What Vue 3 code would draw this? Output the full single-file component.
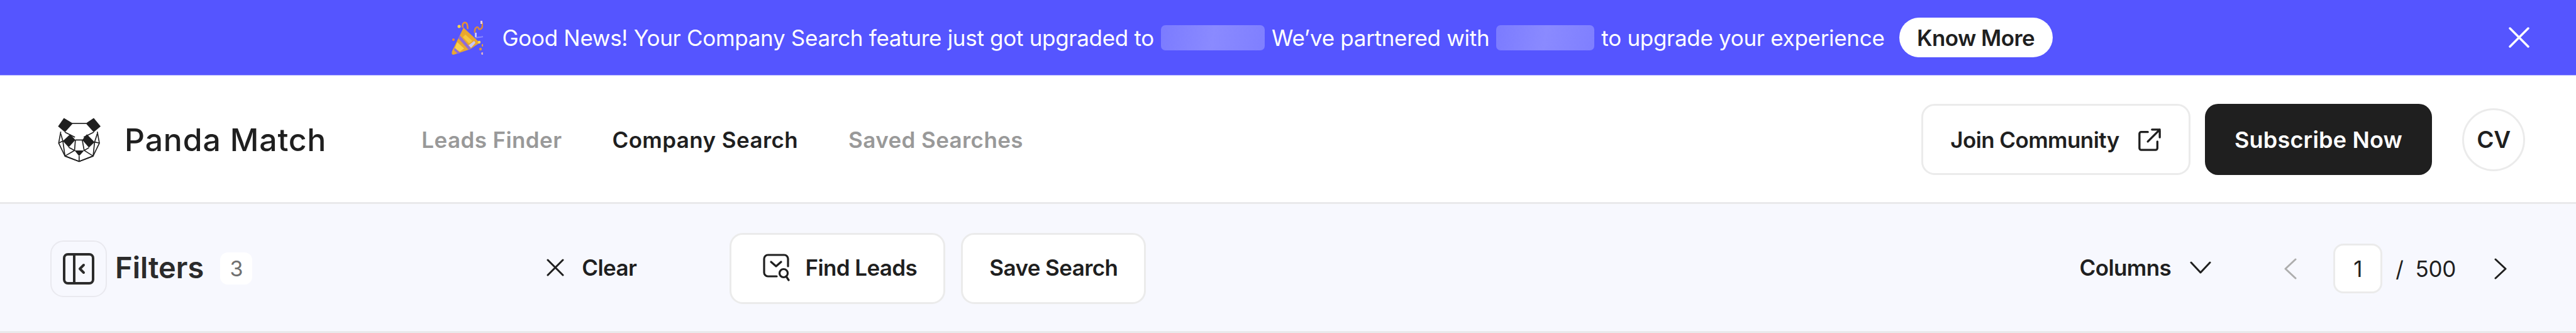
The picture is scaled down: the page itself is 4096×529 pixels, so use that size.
<script setup>
const links = [
  { label: 'Leads Finder', active: false },
  { label: 'Company Search', active: true },
  { label: 'Saved Searches', active: false },
]
</script>

<template>
  <div class="page">
    <div class="banner">
      <div class="banner-content">
        <svg class="party" viewBox="0 0 50 58" width="50" height="58">
          <path d="M19 13 L45 37 L37 42 L30 47 L3 56 C0 56 0 53 1 50 Z" fill="#e9a72e" />
          <path d="M9 36 L20 46 L13 51 L5 46 Z" fill="#fad24a" />
          <path d="M22 24 L33 34 L28 38 L18 28 Z" fill="#f6c93d" />
          <path d="M13 25 L31 46 L27 48 L11 30 Z" fill="#8f6bd8" />
          <path d="M5 45 L14 53 L10 54.500 L4 49 Z" fill="#8f6bd8" />
          <path d="M27 41 L36 34 L38 37 L31 45 Z" fill="#c9c6f4" />
          <path d="M18 13 C16 6 21 3 24 6 C26 9 25 12 26 15" fill="none" stroke="#e8922e" stroke-width="2.500" />
          <path d="M37 21 C36 12 42 10 43 14 C44 18 50 14 49 8 C49 5 47 4 47 3" fill="none" stroke="#d8893c" stroke-width="2.500" />
          <rect x="37" y="21" width="3" height="7" fill="#c9c6f4" />
          <rect x="46" y="2" width="3" height="5" fill="#e6d0e0" />
          <path d="M38 29 L52 27" stroke="#8a87ff" stroke-width="2" />
          <circle cx="12" cy="11" r="2.500" fill="#ffd94a" />
          <circle cx="44" cy="36" r="2.200" fill="#ffd94a" />
          <circle cx="3" cy="32" r="2" fill="#e8883c" />
          <circle cx="50" cy="41" r="2.200" fill="#e8a13c" />
          <circle cx="46" cy="47" r="2.200" fill="#d8933c" />
          <circle cx="49" cy="54" r="2" fill="#d8b0c8" />
        </svg>
        <span class="banner-text">Good News! Your Company Search feature just got upgraded to</span>
        <span class="blur wide"></span>
        <span class="banner-text">We’ve partnered with</span>
        <span class="blur"></span>
        <span class="banner-text">to upgrade your experience</span>
        <button class="know-more">Know More</button>
      </div>
      <svg class="banner-close" viewBox="0 0 33 33" width="33" height="33">
        <path d="M2 2 L31 31 M31 2 L2 31" stroke="#fff" stroke-width="3.500" stroke-linecap="round" />
      </svg>
    </div>

    <header class="topnav">
      <div class="brand">
        <svg class="panda" viewBox="90 80 220 225" width="73" height="75">
          <g fill="#1f1f1f">
            <path d="M125 90 L168 116 L130 158 L97 130 Z" />
            <path d="M268 90 L301 130 L268 158 L230 116 Z" />
            <path d="M155 168 L180 195 L148 230 L120 200 Z" />
            <path d="M235 168 L272 205 L245 232 L213 195 Z" />
            <path d="M176 245 L222 245 L198 272 Z" />
          </g>
          <g fill="none" stroke="#1f1f1f" stroke-width="5" stroke-linejoin="round">
            <path d="M165 116 H232" />
            <path d="M110 155 L100 210 L130 272 L198 298 L265 272 L295 210 L285 155" />
            <path d="M130 158 L178 182 M268 158 L220 182" />
            <path d="M110 165 L120 200 L100 210 M285 165 L272 205 L295 210" />
            <path d="M120 200 L130 272 L176 245 L148 230 M272 205 L265 272 L222 245 L245 232" />
            <path d="M180 195 H213 L222 245 M180 195 L176 245 M198 272 V298 M130 272 L198 298 L265 272" />
          </g>
        </svg>
        <span class="brand-name">Panda Match</span>
      </div>
      <nav class="links">
        <a v-for="l in links" :key="l.label" class="link" :class="{ active: l.active }">{{ l.label }}</a>
      </nav>
      <div class="actions">
        <button class="btn-outline join">
          Join Community
          <svg viewBox="0 0 40 40" width="38" height="38" fill="none" stroke="#1f1f1f" stroke-width="3.500" stroke-linecap="round" stroke-linejoin="round">
            <path d="M17 7 H6 A3 3 0 0 0 3 10 V34 A3 3 0 0 0 6 37 H30 A3 3 0 0 0 33 34 V23" />
            <path d="M17 23 L37 3 M24 3 H37 V16" />
          </svg>
        </button>
        <button class="subscribe">Subscribe Now</button>
        <div class="avatar">CV</div>
      </div>
    </header>

    <div class="filterbar">
      <div class="toggle">
        <svg viewBox="0 0 50 50" width="50" height="50" fill="none" stroke="#2b2b2b" stroke-width="4" stroke-linecap="round" stroke-linejoin="round">
          <rect x="2" y="2" width="46" height="46" rx="6" />
          <path d="M18 2 V48" />
          <path d="M33 19 L27 25 L33 31" />
        </svg>
      </div>
      <span class="filters-title">Filters</span>
      <span class="badge">3</span>
      <button class="clear">
        <svg viewBox="0 0 28 28" width="28" height="28">
          <path d="M2 2 L26 26 M26 2 L2 26" stroke="#1f1f1f" stroke-width="3" stroke-linecap="round" />
        </svg>
        Clear
      </button>
      <button class="btn-outline small find">
        <svg viewBox="0 0 44 44" width="44" height="44" fill="none" stroke="#1f1f1f" stroke-width="3.200" stroke-linecap="round" stroke-linejoin="round">
          <path d="M22 36 H8 A6 6 0 0 1 2 30 V8 A6 6 0 0 1 8 2 H34 A6 6 0 0 1 40 8 V20" />
          <path d="M13 13 L21 20 L29 13" />
          <circle cx="33" cy="31" r="6.500" />
          <path d="M37 36 L41 42" />
        </svg>
        Find Leads
      </button>
      <button class="btn-outline small save">Save Search</button>

      <div class="right-tools">
        <button class="columns">
          Columns
          <svg viewBox="0 0 34 20" width="34" height="20" fill="none" stroke="#1f1f1f" stroke-width="3" stroke-linecap="round" stroke-linejoin="round">
            <path d="M2 2 L17 18 L32 2" />
          </svg>
        </button>
        <svg class="prev" viewBox="0 0 20 34" width="20" height="34" fill="none" stroke="#aeaeae" stroke-width="3" stroke-linecap="round" stroke-linejoin="round">
          <path d="M18 2 L2 17 L18 32" />
        </svg>
        <div class="page-input">1</div>
        <span class="slash">/</span>
        <span class="total">500</span>
        <svg class="next" viewBox="0 0 20 34" width="20" height="34" fill="none" stroke="#1f1f1f" stroke-width="3" stroke-linecap="round" stroke-linejoin="round">
          <path d="M2 2 L18 17 L2 32" />
        </svg>
      </div>
    </div>
  </div>
</template>

<style>
html, body {
  margin: 0;
  background: #fff;
}
</style>

<style scoped>
.page {
  width: 4096px;
  height: 529px;
  overflow: hidden;
  display: flex;
  flex-direction: column;
  font-family: "Inter", "Liberation Sans", sans-serif;
  font-size: 35px;
  letter-spacing: -0.3px;
  color: #1f1f1f;
}
button {
  font-family: inherit;
  font-size: inherit;
  letter-spacing: inherit;
  color: inherit;
  background: none;
  border: none;
  padding: 0;
}
.banner {
  height: 119px;
  flex: none;
  background: #5555ff;
  border-bottom: 1px solid #a8a8ff;
  display: flex;
  align-items: center;
}
.banner-content {
  flex: 1;
  display: flex;
  align-items: center;
  justify-content: center;
}
.party {
  margin-right: 30px;
}
.banner-text {
  color: #fff;
  white-space: nowrap;
}
.blur {
  width: 156px;
  height: 40px;
  margin: 0 11px;
  border-radius: 7px;
  background: linear-gradient(100deg, #7b7bff, #8a8aff 50%, #7f7fff);
}
.blur.wide {
  width: 165px;
}
.know-more {
  margin-left: 23px;
  width: 244px;
  height: 63px;
  border-radius: 32px;
  background: #fff;
  font-weight: 600;
  letter-spacing: -0.6px;
}
.banner-close {
  margin: 0 74px 0 7px;
}
.topnav {
  height: 204px;
  flex: none;
  box-sizing: border-box;
  padding: 2px 81px 0 90px;
  background: #fff;
  border-bottom: 3px solid #e9e9eb;
  display: flex;
  align-items: center;
}
.brand {
  display: flex;
  align-items: center;
  gap: 35px;
}
.brand-name {
  font-size: 50px;
  font-weight: 500;
  letter-spacing: 0.8px;
  white-space: nowrap;
}
.links {
  margin-left: 151px;
  display: flex;
  gap: 80px;
}
.link {
  font-size: 35px;
  letter-spacing: 0.4px;
  font-weight: 600;
  color: #999;
  white-space: nowrap;
}
.link.active {
  color: #1f1f1f;
}
.actions {
  margin-left: auto;
  display: flex;
  align-items: center;
}
.btn-outline {
  box-sizing: border-box;
  display: flex;
  align-items: center;
  background: #fff;
  border: 3px solid #ebebeb;
  border-radius: 21px;
  font-weight: 600;
  letter-spacing: -0.6px;
  white-space: nowrap;
}
.join {
  width: 428px;
  height: 113px;
  justify-content: center;
  gap: 29px;
}
.subscribe {
  margin-left: 23px;
  width: 361px;
  height: 113px;
  border-radius: 21px;
  background: #1f1f1f;
  color: #fff;
  font-size: 36px;
  letter-spacing: 0.2px;
  font-weight: 600;
  white-space: nowrap;
}
.avatar {
  margin-left: 48px;
  box-sizing: border-box;
  width: 100px;
  height: 100px;
  border-radius: 50%;
  border: 3px solid #ebebeb;
  display: flex;
  align-items: center;
  justify-content: center;
  font-size: 37px;
  font-weight: 600;
}
.filterbar {
  flex: 1;
  box-sizing: border-box;
  padding: 3px 110px 0 80px;
  background: #f7f8fe;
  border-bottom: 3px solid #e9e9eb;
  display: flex;
  align-items: center;
}
.toggle {
  box-sizing: border-box;
  width: 90px;
  height: 90px;
  border: 2px solid #e9e9ef;
  border-radius: 21px;
  display: flex;
  align-items: center;
  justify-content: center;
}
.filters-title {
  margin: 0 0 5px 13px;
  font-size: 47px;
  letter-spacing: 0;
  font-weight: 600;
  color: #2b2b2b;
}
.badge {
  margin-left: 26px;
  width: 51px;
  height: 51px;
  border-radius: 12px;
  background: #fff;
  color: #707070;
  font-size: 34px;
  display: flex;
  align-items: center;
  justify-content: center;
}
.clear {
  margin-left: 468px;
  padding-bottom: 3px;
  display: flex;
  align-items: center;
  gap: 28px;
  font-weight: 600;
  letter-spacing: -0.6px;
}
.small {
  height: 113px;
  padding-bottom: 3px;
  justify-content: center;
}
.find {
  margin-left: 148px;
  width: 343px;
  padding-left: 8px;
  gap: 23px;
}
.save {
  margin-left: 25px;
  width: 294px;
}
.right-tools {
  margin-left: auto;
  display: flex;
  align-items: center;
}
.columns {
  display: flex;
  align-items: center;
  gap: 30px;
  padding-bottom: 3px;
  font-weight: 600;
  letter-spacing: -0.6px;
}
.prev {
  margin-left: 116px;
}
.page-input {
  box-sizing: border-box;
  margin-left: 58px;
  width: 78px;
  height: 79px;
  background: #fff;
  border: 3px solid #ebebeb;
  border-radius: 16px;
  display: flex;
  align-items: center;
  justify-content: center;
}
.slash {
  margin-left: 21px;
}
.total {
  margin-left: 19px;
}
.next {
  margin-left: 61px;
}
</style>
